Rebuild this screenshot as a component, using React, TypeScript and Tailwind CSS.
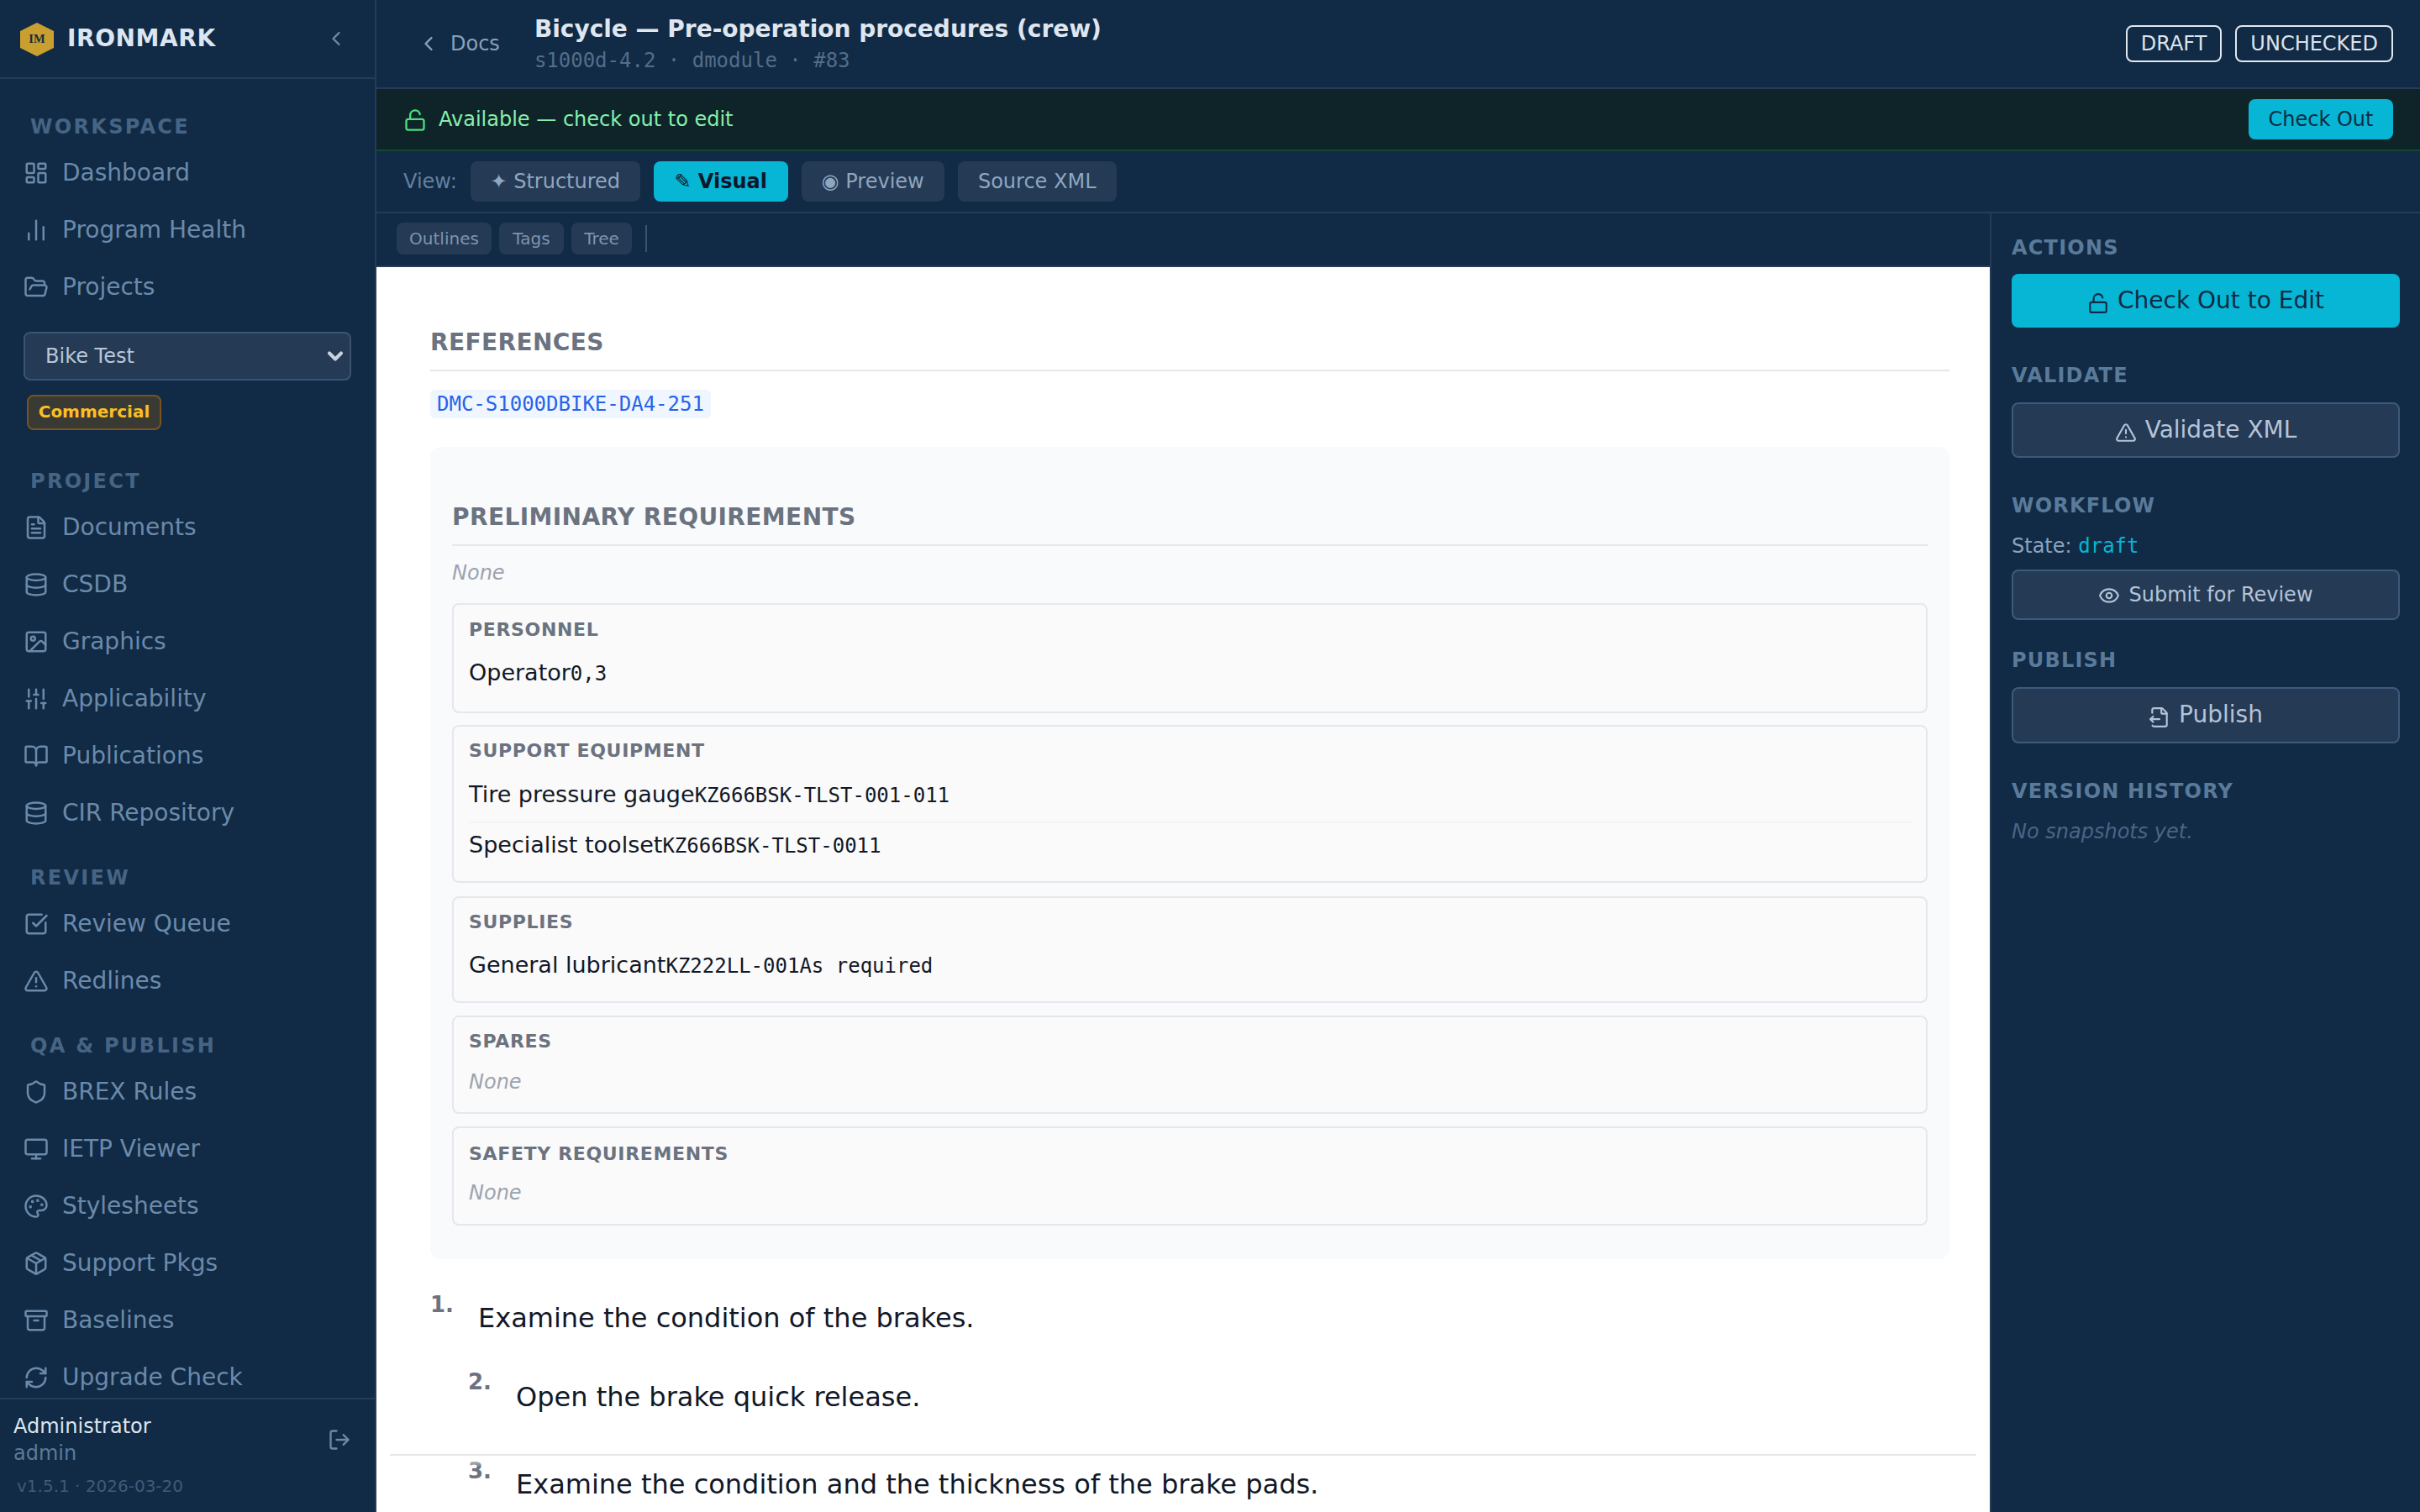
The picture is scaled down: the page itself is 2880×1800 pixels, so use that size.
import React from "react";
import {
  LayoutDashboard, ChartNoAxesColumn, FolderOpen, FileText, Database, Image, SlidersVertical, BookOpen,
  SquareCheckBig, TriangleAlert, Shield, Monitor, Palette, Package, Archive, RefreshCw, LogOut,
  ChevronLeft, ChevronDown, LockOpen, Eye, FileOutput,
} from "lucide-react";

type Item = { label: string; icon: React.ComponentType<any> };

function NavLabel({ children }: { children: React.ReactNode }) {
  return (
    <div className="h-[42px] pt-[2px] pl-[36px] text-[24px] leading-[42px] font-bold tracking-[2.3px] text-[#466484] uppercase">
      {children}
    </div>
  );
}

function NavRow({ label, icon: Icon }: Item) {
  return (
    <div className="flex h-[68px] items-center gap-[16px] pl-[28px] text-[28px] text-[#6b8aaa]">
      <Icon size={30} className="mt-[4px] shrink-0" />
      <span className="mt-[3px]">{label}</span>
    </div>
  );
}

function PanelLabel({ children, className }: { children: React.ReactNode; className: string }) {
  return (
    <div className={"h-[32px] text-[24px] leading-[32px] font-bold tracking-[1.2px] text-[#5a7a9a] uppercase " + className}>
      {children}
    </div>
  );
}

function SectionTitle({ children }: { children: React.ReactNode }) {
  return (
    <div className="h-[40px] text-[28px] leading-[40px] font-bold tracking-[0.4px] text-[#6b7280] uppercase">{children}</div>
  );
}

function CardLabel({ children, className }: { children: React.ReactNode; className?: string }) {
  return (
    <div className={"h-[30px] text-[22px] leading-[30px] font-bold tracking-[0.66px] text-[#6b7280] uppercase " + (className ?? "mb-[11px]")}>
      {children}
    </div>
  );
}

function Line({ name, code, divider }: { name: string; code: string; divider?: boolean }) {
  return (
    <div className={"pt-[6px] text-[27px] leading-[40px] text-[#111827] " + (divider ? "border-b-[2px] border-[#f3f4f6] pb-[11px]" : "pb-[12px]")}>
      {name}
      <span className="font-['DejaVu_Sans_Mono'] text-[24px]">{code}</span>
    </div>
  );
}

function None({ className }: { className: string }) {
  return <div className={"pt-[4px] text-[24px] leading-[36px] text-[#9ca3af] italic " + className}>None</div>;
}

const card = "rounded-[8px] border-[2px] border-[#e5e7eb] bg-[#fafafa] px-[18px]";

export default function App() {
  return (
    <div className="flex h-screen w-screen overflow-hidden bg-[#112a45] font-['DejaVu_Sans','Liberation_Sans',sans-serif]">
      {/* Sidebar */}
      <aside className="flex h-full w-[448px] shrink-0 flex-col border-r-[2px] border-[#263b57]">
        <div className="flex h-[94px] shrink-0 items-center border-b-[2px] border-[#263b57] pr-[32px] pl-[24px]">
          <svg width="40" height="40" viewBox="0 0 40 40" className="mt-[1px] shrink-0">
            <polygon points="20,0 40,10 40,30 20,40 0,30 0,10" fill="#c9a030" />
            <text x="20" y="24" textAnchor="middle" fontFamily="Liberation Serif" fontWeight="700" fontSize="14.5" fill="#1a2a3a">IM</text>
          </svg>
          <span className="ml-[16px] flex-1 text-[28px] font-bold tracking-[0.6px] text-[#dbe6f2]">IRONMARK</span>
          <ChevronLeft size={28} className="text-[#6b8aaa]" />
        </div>
        <nav className="min-h-0 flex-1 overflow-hidden pt-[34px]">
          <NavLabel>Workspace</NavLabel>
          <NavRow label="Dashboard" icon={LayoutDashboard} />
          <NavRow label="Program Health" icon={ChartNoAxesColumn} />
          <NavRow label="Projects" icon={FolderOpen} />
          <div className="mt-[21px] px-[28px]">
            <div className="relative">
              <select className="h-[58px] w-full appearance-none rounded-[8px] border-[2px] border-[#3a5472] bg-[#253a55] pl-[24px] text-[24px] text-[#b8c7d9]">
                <option>Bike Test</option>
              </select>
              <ChevronDown size={28} strokeWidth={3.5} className="pointer-events-none absolute top-[15px] right-[5px] text-[#c7d2e0]" />
            </div>
          </div>
          <div className="mt-[17px] ml-[32px] flex h-[42px] w-[160px] items-center justify-center rounded-[8px] border-[2px] border-[#7a5320] bg-[#3a3a35] pb-[2px] text-[20px] font-bold text-[#fbbf24]">
            Commercial
          </div>
          <div className="mt-[38px]"><NavLabel>Project</NavLabel></div>
          <NavRow label="Documents" icon={FileText} />
          <NavRow label="CSDB" icon={Database} />
          <NavRow label="Graphics" icon={Image} />
          <NavRow label="Applicability" icon={SlidersVertical} />
          <NavRow label="Publications" icon={BookOpen} />
          <NavRow label="CIR Repository" icon={Database} />
          <div className="mt-[22px]"><NavLabel>Review</NavLabel></div>
          <NavRow label="Review Queue" icon={SquareCheckBig} />
          <NavRow label="Redlines" icon={TriangleAlert} />
          <div className="mt-[22px]"><NavLabel>QA &amp; Publish</NavLabel></div>
          <NavRow label="BREX Rules" icon={Shield} />
          <NavRow label="IETP Viewer" icon={Monitor} />
          <NavRow label="Stylesheets" icon={Palette} />
          <NavRow label="Support Pkgs" icon={Package} />
          <NavRow label="Baselines" icon={Archive} />
          <NavRow label="Upgrade Check" icon={RefreshCw} />
        </nav>
        <div className="h-[136px] shrink-0 border-t-[2px] border-[#263b57] pt-[16px] pl-[16px]">
          <div className="flex items-start pr-[28px]">
            <div className="flex-1">
              <div className="text-[24px] leading-[32px] text-[#dbe6f0]">Administrator</div>
              <div className="text-[24px] leading-[32px] text-[#5b7a9a]">admin</div>
            </div>
            <LogOut size={28} className="mt-[18px] text-[#6b8aaa]" />
          </div>
          <div className="mt-[8px] pl-[4px] text-[20px] leading-[30px] text-[#405a78]">v1.5.1 · 2026-03-20</div>
        </div>
      </aside>

      {/* Main */}
      <main className="flex h-full min-w-0 flex-1 flex-col">
        <header className="flex h-[106px] shrink-0 items-center border-b-[2px] border-[#263b57] pr-[32px] pl-[48px]">
          <ChevronLeft size={28} className="text-[#8aa0b8]" />
          <span className="ml-[12px] text-[24px] text-[#8aa0b8]">Docs</span>
          <div className="ml-[41px] flex-1">
            <div className="mb-[2px] text-[28px] leading-[38px] font-bold text-[#dfe6ef]">Bicycle — Pre-operation procedures (crew)</div>
            <div className="font-['DejaVu_Sans_Mono'] text-[24px] leading-[32px] text-[#546d8a]">s1000d-4.2 · dmodule · #83</div>
          </div>
          <div className="flex gap-[16px]">
            <span className="flex h-[44px] items-center rounded-[8px] border-[2px] border-[#e2e8f0] px-[16px] text-[24px] text-[#dbe4ee]">DRAFT</span>
            <span className="flex h-[44px] items-center rounded-[8px] border-[2px] border-[#e2e8f0] px-[16px] text-[24px] text-[#dbe4ee]">UNCHECKED</span>
          </div>
        </header>

        <div className="flex h-[74px] shrink-0 items-center border-b-[2px] border-[#14472e] bg-[#0f2428] pr-[32px] pl-[32px]">
          <LockOpen size={28} className="mt-[2px] text-[#4ade80]" />
          <span className="ml-[14px] flex-1 text-[24px] text-[#86efac]">Available — check out to edit</span>
          <button className="h-[48px] w-[172px] rounded-[8px] bg-[#06b6d4] text-[24px] text-[#0f2a44]">Check Out</button>
        </div>

        <div className="flex h-[74px] shrink-0 items-center gap-[16px] border-b-[2px] border-[#263b57] pl-[32px] text-[24px]">
          <span className="text-[#64809f]">View:</span>
          <button className="h-[48px] w-[202px] rounded-[8px] bg-[#253a55] text-[#8fa6bf]">✦ Structured</button>
          <button className="h-[48px] w-[160px] rounded-[8px] bg-[#06b6d4] font-bold text-[#0f172a]">✎ Visual</button>
          <button className="h-[48px] w-[170px] rounded-[8px] bg-[#253a55] text-[#8fa6bf]">◉ Preview</button>
          <button className="h-[48px] w-[189px] rounded-[8px] bg-[#253a55] text-[#8fa6bf]">Source XML</button>
        </div>

        <div className="flex min-h-0 flex-1">
          <div className="flex min-w-0 flex-1 flex-col">
            <div className="flex h-[64px] shrink-0 items-center gap-[9px] border-b-[2px] border-[#263b57] pb-[2px] pl-[24px] text-[20px] text-[#7d95ae]">
              <span className="flex h-[38px] w-[113px] items-center justify-center rounded-[8px] bg-[#253a55]">Outlines</span>
              <span className="flex h-[38px] w-[77px] items-center justify-center rounded-[8px] bg-[#253a55]">Tags</span>
              <span className="flex h-[38px] w-[72px] items-center justify-center rounded-[8px] bg-[#253a55]">Tree</span>
              <span className="ml-[7px] h-[32px] w-[2px] bg-[#3a5472]" />
            </div>
            <div className="relative min-h-0 flex-1 overflow-hidden bg-white pt-[70px] pr-[48px] pl-[64px]">
              <SectionTitle>References</SectionTitle>
              <div className="mt-[12px] h-[2px] bg-[#e5e7eb]" />
              <div className="mt-[22px] h-[34px] w-fit rounded-[6px] bg-[#eff6ff] px-[8px] font-['DejaVu_Sans_Mono'] text-[24px] leading-[34px] text-[#2563eb]">
                DMC-S1000DBIKE-DA4-251
              </div>

              <div className="mt-[34px] rounded-[12px] bg-[#f9fafb] px-[26px] pt-[64px] pb-[40px]">
                <SectionTitle>Preliminary Requirements</SectionTitle>
                <div className="mt-[12px] h-[2px] bg-[#e5e7eb]" />
                <div className="mt-[14px] h-[36px] text-[24px] leading-[36px] text-[#9ca3af] italic">None</div>
                <div className="mt-[18px] flex flex-col gap-[15px]">
                  <div className={card + " pt-[15px] pb-[13px]"}>
                    <CardLabel className="mb-[10px]">Personnel</CardLabel>
                    <Line name="Operator" code="0,3" />
                  </div>
                  <div className={card + " -mt-[1px] mb-[1px] pt-[14px] pb-[10px]"}>
                    <CardLabel>Support Equipment</CardLabel>
                    <Line name="Tire pressure gauge" code="KZ666BSK-TLST-001-011" divider />
                    <Line name="Specialist toolset" code="KZ666BSK-TLST-0011" />
                  </div>
                  <div className={card + " pt-[14px] pb-[10px]"}>
                    <CardLabel className="mb-[10px]">Supplies</CardLabel>
                    <Line name="General lubricant" code="KZ222LL-001As required" />
                  </div>
                  <div className={card + " pt-[14px] pb-[12px]"}>
                    <CardLabel>Spares</CardLabel>
                    <None className="pb-[6px]" />
                  </div>
                  <div className={card + " pt-[16px] pb-[12px]"}>
                    <CardLabel className="mb-[9px]">Safety Requirements</CardLabel>
                    <None className="pb-[7px]" />
                  </div>
                </div>
              </div>

              <div className="mt-[36px] flex">
                <span className="w-[57px] shrink-0 text-[26px] leading-[36px] font-bold text-[#6b7280]">1.</span>
                <span className="mt-[10px] text-[32px] leading-[48px] text-[#111827]">Examine the condition of the brakes.</span>
              </div>
              <div className="mt-[34px] ml-[45px] flex">
                <span className="w-[57px] shrink-0 text-[26px] leading-[36px] font-bold text-[#6b7280]">2.</span>
                <span className="mt-[12px] text-[32px] leading-[48px] text-[#111827]">Open the brake quick release.</span>
              </div>
              <div className="mt-[46px] ml-[45px] flex">
                <span className="w-[57px] shrink-0 text-[26px] leading-[36px] font-bold text-[#6b7280]">3.</span>
                <span className="mt-[10px] text-[32px] leading-[48px] text-[#111827]">Examine the condition and the thickness of the brake pads.</span>
              </div>

              <div className="absolute top-[1413px] right-[16px] left-[16px] h-[16px] border-t-[2px] border-[#e5e7eb] bg-linear-to-b from-white to-transparent" />
            </div>
          </div>

          <aside className="w-[512px] shrink-0 border-l-[2px] border-[#263b57] pt-[25px] pr-[24px] pl-[24px]">
            <PanelLabel className="">Actions</PanelLabel>
            <button className="mt-[15px] flex h-[64px] w-full items-center justify-center gap-[10px] rounded-[8px] bg-[#06b6d4] text-[28px] text-[#0f2a44]">
              <LockOpen size={26} className="mt-[6px]" /> Check Out to Edit
            </button>
            <PanelLabel className="mt-[41px]">Validate</PanelLabel>
            <button className="mt-[16px] flex h-[66px] w-full items-center justify-center gap-[10px] rounded-[8px] border-[2px] border-[#3d5a7a] bg-[#253a55] text-[28px] text-[#b4c4d8]">
              <TriangleAlert size={26} className="mt-[6px]" /> Validate XML
            </button>
            <PanelLabel className="mt-[41px]">Workflow</PanelLabel>
            <div className="mt-[16px] h-[32px] text-[24px] leading-[32px] text-[#8ba3bc]">
              State: <span className="font-['DejaVu_Sans_Mono'] text-[#06b6d4]">draft</span>
            </div>
            <button className="mt-[12px] flex h-[60px] w-full items-center justify-center gap-[10px] rounded-[8px] border-[2px] border-[#3d5a7a] bg-[#253a55] text-[24px] text-[#b4c4d8]">
              <Eye size={26} className="mt-[2px]" /> Submit for Review
            </button>
            <PanelLabel className="mt-[32px]">Publish</PanelLabel>
            <button className="mt-[16px] flex h-[67px] w-full items-center justify-center gap-[10px] rounded-[8px] border-[2px] border-[#3d5a7a] bg-[#253a55] pb-[2px] text-[28px] text-[#b4c4d8]">
              <FileOutput size={26} className="mt-[6px]" /> Publish
            </button>
            <PanelLabel className="mt-[41px]">Version History</PanelLabel>
            <div className="mt-[16px] h-[32px] text-[24px] leading-[32px] text-[#4a6585] italic">No snapshots yet.</div>
          </aside>
        </div>
      </main>
    </div>
  );
}
